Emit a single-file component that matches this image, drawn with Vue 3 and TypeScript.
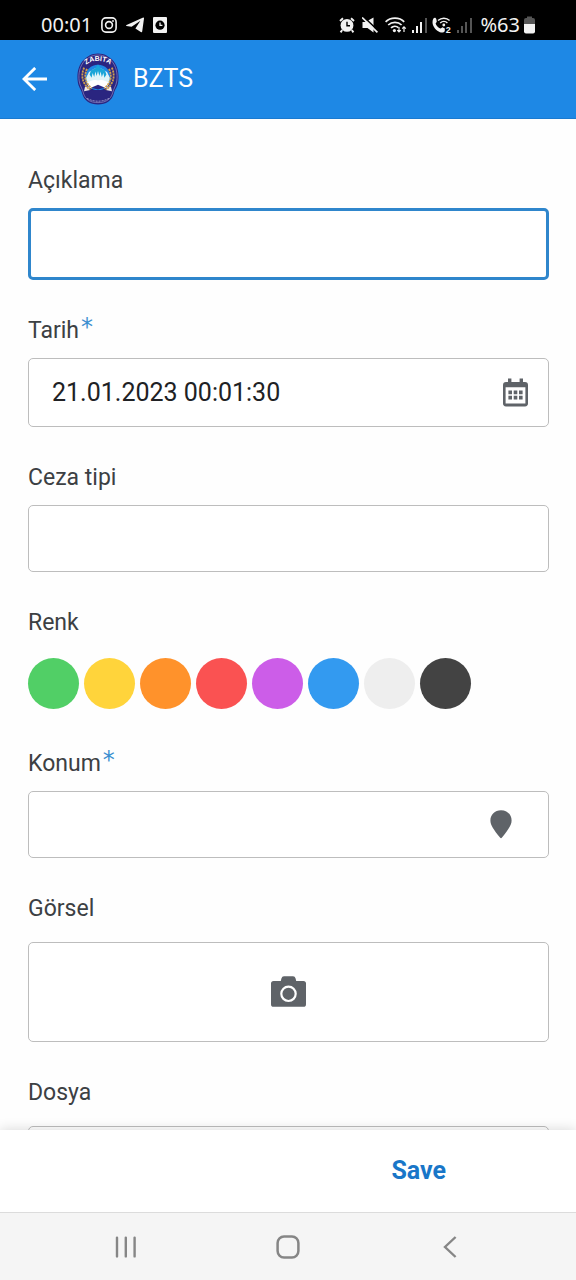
<script setup lang="ts">
import { ref } from 'vue'

interface Swatch {
  name: string
  value: string
}

const description = ref<string>('')
const date = ref<string>('21.01.2023 00:01:30')
const penaltyType = ref<string>('')
const location = ref<string>('')
const color = ref<string>('')

const swatches: Swatch[] = [
  { name: 'Yeşil', value: '#51cf66' },
  { name: 'Sarı', value: '#ffd43b' },
  { name: 'Turuncu', value: '#ff922b' },
  { name: 'Kırmızı', value: '#fa5252' },
  { name: 'Mor', value: '#cc5de8' },
  { name: 'Mavi', value: '#339af0' },
  { name: 'Beyaz', value: '#eeeeee' },
  { name: 'Siyah', value: '#434343' },
]
</script>

<template>
  <div class="screen">
    <div class="status">
      <div class="status-group left">
        <span class="status-text">00:01</span>
        <svg width="16" height="16" viewBox="0 0 16 16" fill="none" stroke="#f2f2f2" stroke-width="1.6">
          <rect x="0.9" y="0.9" width="14.2" height="14.2" rx="4" />
          <circle cx="8" cy="8" r="3.4" />
          <circle cx="12" cy="4" r="0.9" fill="#f2f2f2" stroke="none" />
        </svg>
        <svg width="18" height="16" viewBox="0 0 18 16" fill="#f2f2f2">
          <path d="M0 8.2 L17.2 0.6 Q18.2 0.4 18 1.5 L16.2 14.6 Q15.9 15.8 14.8 15.1 L9.4 11.4 L14.4 3.8 L5.6 9.7 L0.4 8.9 Z" />
        </svg>
        <svg class="doc" width="14" height="16" viewBox="0 0 14 16">
          <rect width="14" height="16" rx="1" fill="#f2f2f2" />
          <circle cx="7" cy="8.2" r="4.6" fill="#000" />
          <path d="M7 5.6 V8.4 H9.4" fill="none" stroke="#f2f2f2" stroke-width="1.3" />
        </svg>
      </div>
      <div class="status-group right">
        <svg class="spaced" width="16" height="16" viewBox="0 0 16 16">
          <path d="M1 4 L4 1.2 M15 4 L12 1.2 M3.2 13 L1.6 15.4 M12.8 13 L14.4 15.4" stroke="#f2f2f2" stroke-width="1.9" />
          <circle cx="8" cy="8.4" r="6.4" fill="#f2f2f2" />
          <path d="M8 4.8 V8.8 H11" fill="none" stroke="#000" stroke-width="1.4" />
        </svg>
        <svg class="spaced" width="16" height="16" viewBox="0 0 16 16">
          <path d="M0.5 5 H3.5 L11.5 0.4 V15.6 L5.5 11 H0.5 Z" fill="#f2f2f2" />
          <path d="M1.2 -0.6 L16.6 14.2" stroke="#000" stroke-width="1.6" />
          <path d="M0 0.4 L15.4 15.4" stroke="#f2f2f2" stroke-width="1.7" />
        </svg>
        <svg width="22" height="16" viewBox="0 0 22 16" fill="none" stroke="#f2f2f2" stroke-width="1.7">
          <path d="M0.6 4.8 C5.5 0 14.5 0 19.2 4.8" />
          <path d="M3.2 8 C7 4.4 13 4.4 16.6 8" />
          <path d="M6 10.8 C8.2 8.8 11.4 8.8 13.4 10.6" />
          <circle cx="9.4" cy="13.6" r="1.6" fill="#f2f2f2" stroke="none" />
          <path d="M14 10 V15 M12.2 13.2 L14 15 L15.8 13.2 M19 15 V9.8 M17.2 11.6 L19 9.8 L20.8 11.6" stroke-width="1.2" />
        </svg>
        <svg width="15" height="16" viewBox="0 0 15 16" fill="#f2f2f2">
          <rect x="0" y="13" width="2" height="3" />
          <rect x="4" y="9" width="2" height="7" />
          <rect x="8" y="5" width="2" height="11" />
          <rect x="13" y="1" width="2" height="15" fill="#555" />
        </svg>
        <svg width="20" height="24" viewBox="0 -4 20 24">
          <path d="M1.4 1.6 C2.6 0.2 4 0.8 4.4 2.4 L4.8 4.8 L3.6 6.4 C4.4 8.8 6.6 10.8 8.8 11.6 L10.4 10.2 L12.8 11.4 V14 C12 15.6 10 15.8 8 15.2 C3.6 13.6 -1.6 7.6 1.4 1.6 Z" fill="#f2f2f2" />
          <path d="M6 3.6 C9.4 0.4 14.4 0.4 17.6 3.6 M8.2 6 C10.4 4 13.4 4 15.4 6" fill="none" stroke="#f2f2f2" stroke-width="1.4" />
          <circle cx="11.8" cy="8" r="1.4" fill="#f2f2f2" />
          <text x="13.8" y="15.6" class="sim">2</text>
        </svg>
        <svg width="15" height="16" viewBox="0 0 15 16" fill="#555">
          <rect x="0" y="13" width="2" height="3" />
          <rect x="4" y="9" width="2" height="7" />
          <rect x="8" y="5" width="2" height="11" />
          <rect x="13" y="1" width="2" height="15" />
        </svg>
        <div class="status-group battery">
          <span class="status-text">%63</span>
          <svg width="11" height="18" viewBox="0 0 11 18">
            <path d="M0 8 V4 Q0 2 2 2 H3 V0.6 H8 V2 H9 Q11 2 11 4 V8 Z" fill="#555" />
            <path d="M0 8 H11 V15.5 Q11 17.5 9 17.5 H2 Q0 17.5 0 15.5 Z" fill="#f2f2f2" />
          </svg>
        </div>
      </div>
    </div>

    <header class="appbar">
      <button type="button" class="icon-btn" aria-label="Geri">
        <svg width="25" height="24" viewBox="0 0 25 24" fill="none" stroke="#fff" stroke-width="2.8">
          <path d="M25 12 H2 M13.2 0.9 L2 12 L13.2 23.1" />
        </svg>
      </button>
      <svg class="emblem" width="42" height="52" viewBox="0 0 42 52">
        <defs>
          <path id="emblem-arc" d="M9 11.8 C14 6.8 28 6.8 33 11.8" />
        </defs>
        <path d="M21 0.6 C28 0.6 31 3.4 35 6.4 C41 12 42.4 21 41.2 29 C40.6 34 38 36 37 40 C35 48 29 51.4 21 51.4 C13 51.4 7 48 5 40 C4 36 1.4 34 0.8 29 C-0.4 21 1 12 7 6.4 C11 3.4 14 0.6 21 0.6 Z" fill="#2a2580" />
        <path d="M21 2 C28 2 30.5 5 34.2 7.6 C39.4 13 40.8 21 39.8 28 C39 33 36.8 35 35.6 40 C33.6 46.8 28.4 49.6 21 49.6 C13.6 49.6 8.4 46.8 6.4 40 C5.2 35 3 33 2.2 28 C1.2 21 2.6 13 7.8 7.6 C11.5 5 14 2 21 2 Z" fill="none" stroke="#8f8bc4" stroke-width="0.7" />
        <circle cx="21" cy="24.5" r="12.8" fill="#1e88e5" />
        <path d="M21 14 L26 16.6 L30 19 L33 25 L31.6 31 L25 30.6 L21 31.4 L17 30.6 L10.4 31 L9 25 L12 19 L16 16.6 Z" fill="#dff3f8" />
        <path d="M21 11.6 L24 15.4 L28 17.2 L29.4 21.6 L27.4 24.8 L26.4 20 L24.8 24 L23.6 18.6 L22.4 23 L21 18 L19.6 23 L18.4 18.6 L17.2 24 L15.6 20 L14.6 24.8 L12.6 21.6 L14 17.2 L18 15.4 Z" fill="#1aa5d8" />
        <path d="M9.6 30.6 Q15 25.8 21 27.4 Q27 25.8 32.4 30.6 L28.6 35 L13.4 35 Z" fill="#fff" />
        <path d="M8 33.8 L13 33.6 L12 37.2 L7 38.2 Z M34 33.8 L29 33.6 L30 37.2 L35 38.2 Z" fill="#eee8e6" />
        <path d="M14 34.8 L21 31.8 L28 34.8 L21 36.4 Z" fill="#2a2580" />
        <path d="M7.2 14.6 C3.6 22 5 31 13.2 36.8 M10 15.8 C6.6 23 8 30 14.8 35.4 M34.8 14.6 C38.4 22 37 31 28.8 36.8 M32 15.8 C35.4 23 34 30 27.2 35.4" fill="none" stroke="#cfa14e" stroke-width="1.8" stroke-dasharray="2.2 0.8" />
        <path d="M7 39.4 Q21 34.6 35 39.4 Q32.6 48.4 21 48.4 Q9.4 48.4 7 39.4 Z" fill="#2a2580" />
        <path d="M10 45.4 Q21 51 32 45.4" fill="none" stroke="#b9b6dc" stroke-width="0.8" stroke-dasharray="2 1" />
        <text class="emblem-text"><textPath href="#emblem-arc" startOffset="50%" text-anchor="middle">ZABITA</textPath></text>
      </svg>
      <h1 class="title">BZTS</h1>
    </header>

    <form id="record-form" class="form" @submit.prevent>
      <div class="field">
        <label class="label" for="description">Açıklama</label>
        <div class="box active">
          <input id="description" v-model="description" type="text" class="input" />
        </div>
      </div>

      <div class="field">
        <label class="label" for="date">Tarih<span class="required">*</span></label>
        <div class="box">
          <input id="date" v-model="date" type="text" class="input" />
          <button type="button" class="icon-btn calendar" aria-label="Tarih seç">
            <svg width="25" height="29" viewBox="0 0 25 29" fill="#5f6368">
              <path fill-rule="evenodd" d="M5 0.6 H8.4 V4 H16.6 V0.6 H20 V4 H22 Q25 4 25 7 V25.6 Q25 28.4 22 28.4 H3 Q0 28.4 0 25.6 V7 Q0 4 3 4 H5 Z M2.6 9.2 V25.6 H22.4 V9.2 Z" />
              <path d="M5.4 12.6 h3.6 v3.6 h-3.6 z M10.7 12.6 h3.6 v3.6 h-3.6 z M16 12.6 h3.6 v3.6 h-3.6 z M5.4 17.8 h3.6 v3.6 h-3.6 z M10.7 17.8 h3.6 v3.6 h-3.6 z M16 17.8 h3.6 v3.6 h-3.6 z" />
            </svg>
          </button>
        </div>
      </div>

      <div class="field">
        <label class="label" for="penalty">Ceza tipi</label>
        <div class="box">
          <input id="penalty" v-model="penaltyType" type="text" class="input" />
        </div>
      </div>

      <div class="field" role="radiogroup" aria-labelledby="color-label">
        <span id="color-label" class="label">Renk</span>
        <div class="swatches">
          <input
            v-for="s in swatches"
            :key="s.value"
            v-model="color"
            type="radio"
            name="color"
            class="swatch"
            :value="s.value"
            :aria-label="s.name"
            :style="{ backgroundColor: s.value }"
          />
        </div>
      </div>

      <div class="field">
        <label class="label" for="location">Konum<span class="required">*</span></label>
        <div class="box">
          <input id="location" v-model="location" type="text" class="input" />
          <button type="button" class="icon-btn pin" aria-label="Konum seç">
            <svg width="22" height="29" viewBox="0 0 22 29" fill="#5f6368">
              <path d="M11 0.2 C17.2 0.2 21.6 4.6 21.6 10.4 C21.6 15.2 18.4 19.2 12 27.6 Q11 28.8 10 27.6 C3.6 19.2 0.4 15.2 0.4 10.4 C0.4 4.6 4.8 0.2 11 0.2 Z" />
            </svg>
          </button>
        </div>
      </div>

      <div class="field">
        <span class="label">Görsel</span>
        <button type="button" class="upload" aria-label="Görsel ekle">
          <svg width="35" height="32" viewBox="0 0 35 32">
            <path d="M2.6 5 H9.8 L10.4 2.4 Q11 0.2 13 0.2 H22 Q24 0.2 24.6 2.4 L25.2 5 H32.4 Q35 5 35 7.6 V28.2 Q35 30.8 32.4 30.8 H2.6 Q0 30.8 0 28.2 V7.6 Q0 5 2.6 5 Z" fill="#5f6368" />
            <circle cx="17.5" cy="17.8" r="7.2" fill="none" stroke="#fff" stroke-width="2.2" />
          </svg>
        </button>
      </div>

      <div class="field">
        <span class="label">Dosya</span>
        <button type="button" class="upload" aria-label="Dosya ekle"></button>
      </div>
    </form>

    <footer class="actions">
      <button type="submit" form="record-form" class="save">Save</button>
    </footer>

    <nav class="navbar">
      <button type="button" class="icon-btn" aria-label="Son uygulamalar">
        <svg width="22" height="22" viewBox="0 0 22 22" stroke="#868686" stroke-width="2.4" stroke-linecap="round">
          <path d="M2 1.6 V20.4 M10.8 1.6 V20.4 M19.6 1.6 V20.4" />
        </svg>
      </button>
      <button type="button" class="icon-btn" aria-label="Ana ekran">
        <svg width="24" height="24" viewBox="0 0 24 24" fill="none" stroke="#868686" stroke-width="2.5">
          <rect x="1.6" y="1.6" width="20.8" height="20.8" rx="6.4" />
        </svg>
      </button>
      <button type="button" class="icon-btn" aria-label="Geri">
        <svg width="14" height="22" viewBox="0 0 14 22" fill="none" stroke="#868686" stroke-width="2.4">
          <path d="M12.6 1 L2 11 L12.6 21" />
        </svg>
      </button>
    </nav>
  </div>
</template>

<style>
html,
body {
  margin: 0;
  background: #fff;
}
</style>

<style scoped>
.screen {
  display: flex;
  flex-direction: column;
  height: 100vh;
  background: #fefefe;
  font-family: Roboto, "Liberation Sans", sans-serif;
  color: #3c4043;
}

.screen svg {
  display: block;
  flex: none;
}

.status {
  display: flex;
  justify-content: space-between;
  align-items: center;
  flex: none;
  height: 30px;
  padding: 10px 41px 0;
  background: #000;
}

.status-group {
  display: flex;
  align-items: center;
}

.left {
  gap: 9px;
}

.right {
  gap: 5px;
}

.spaced {
  margin-right: 2px;
}

.battery {
  gap: 4px;
  padding-left: 4px;
}

.status-text {
  font: 400 20px/24px "Noto Sans", sans-serif;
  color: #f2f2f2;
}

.sim {
  font: 700 9px "Liberation Sans", sans-serif;
  fill: #f2f2f2;
}

.appbar {
  display: flex;
  align-items: center;
  flex: none;
  height: 78px;
  padding: 0 22px;
  border-bottom: 1px solid #1a7ad0;
  background: #1e88e5;
}

.icon-btn {
  display: flex;
  align-items: center;
  justify-content: center;
  flex: none;
  padding: 0;
  border: 0;
  background: none;
}

.emblem {
  margin: 0 14px 0 30px;
}

.emblem-text {
  font: 700 7px "Liberation Sans", sans-serif;
  fill: #fff;
}

.title {
  margin: 0;
  font-size: 25px;
  line-height: 30px;
  font-weight: 400;
  color: #fff;
}

.form {
  display: flex;
  flex: 1;
  flex-direction: column;
  gap: 37px;
  min-height: 0;
  padding: 48px 27px 37px 28px;
  overflow-y: auto;
  scrollbar-width: none;
}

.field {
  display: flex;
  flex: none;
  flex-direction: column;
  gap: 13px;
}

.label {
  font-size: 23px;
  line-height: 28px;
}

.required {
  margin-left: 2px;
  font: 400 24px/20px "DejaVu Sans", sans-serif;
  vertical-align: 3px;
  color: #3b8fd0;
}

.box {
  display: flex;
  align-items: center;
  box-sizing: border-box;
  min-height: 67px;
  padding: 0 20px 0 23px;
  border: 1px solid #bdbdbd;
  border-radius: 5px;
  background: #fff;
}

.box.active {
  min-height: 72px;
  border: 3px solid #2f86cc;
}

.input {
  flex: 1;
  min-width: 0;
  padding: 0;
  border: 0;
  outline: 0;
  background: none;
  font-family: inherit;
  font-size: 25px;
  line-height: 30px;
  color: #202124;
}

.calendar {
  height: 67px;
}

.pin {
  margin-right: 16px;
}

.swatches {
  display: flex;
  flex-wrap: wrap;
  gap: 5px;
  padding: 8px 0 4px;
}

.swatch {
  appearance: none;
  width: 51px;
  height: 51px;
  margin: 0;
  border-radius: 50%;
}

.upload {
  display: flex;
  align-items: center;
  justify-content: center;
  height: 100px;
  margin-top: 6px;
  padding: 0;
  border: 1px solid #bdbdbd;
  border-radius: 5px;
  background: #fff;
}

.actions {
  display: grid;
  grid-template-columns: 1fr 1fr;
  align-items: center;
  flex: none;
  position: relative;
  height: 82px;
  padding: 0 27px 0 28px;
  background: #fff;
  box-shadow: 0 0 12px rgba(0, 0, 0, 0.16);
}

.save {
  grid-column: 2;
  padding: 8px 0;
  border: 0;
  background: none;
  font-family: inherit;
  font-size: 25px;
  line-height: 30px;
  font-weight: 700;
  color: #1976c8;
}

.navbar {
  display: grid;
  grid-template-columns: repeat(3, 1fr);
  flex: none;
  position: relative;
  height: 67px;
  padding: 0 45px;
  border-top: 1px solid #dcdcdc;
  background: #f5f5f5;
}
</style>
